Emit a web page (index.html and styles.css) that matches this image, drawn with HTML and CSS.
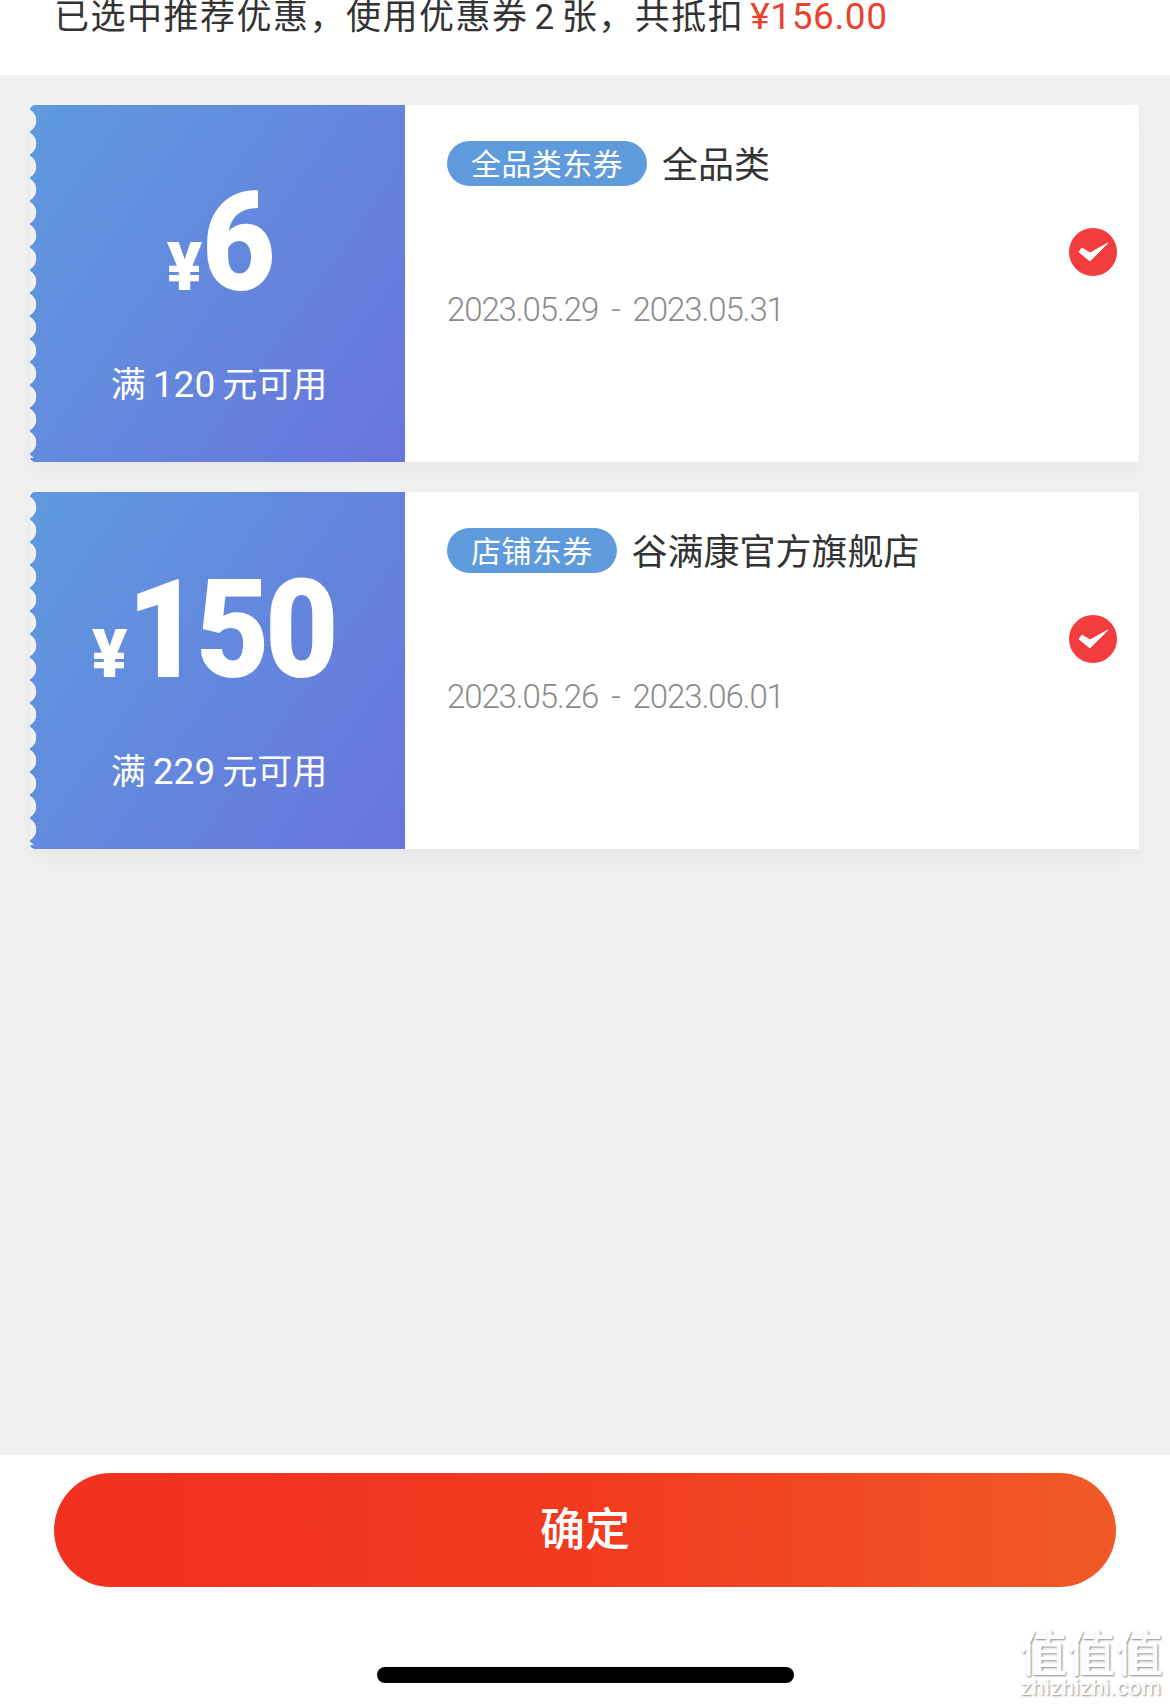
FILE: index.html
```html
<html>
    <head>
        <meta charset="utf-8">
        <link rel="stylesheet" href="styles.css">
    </head>
    <body>
        <div id="page">
            <div class="summary">已选中推荐优惠，使用优惠券<span class="num">2</span>张，共抵扣<span class="total">¥156.00</span></div>
            <div class="list">
                <div class="coupon">
                    <div class="face">
                        <div class="amount"><span class="yen">¥</span><span class="value">6</span></div>
                        <div class="limit">满<span class="num">120</span>元可用</div>
                    </div>
                    <div class="info">
                        <div class="head"><span class="pill">全品类东券</span><span class="title">全品类</span></div>
                        <div class="dates">2023.05.29<span class="sep">-</span>2023.05.31</div>
                    </div>
                    <svg class="check" viewBox="0 0 48 48">
                        <circle cx="24" cy="24" r="24" fill="#f23c3e"/>
                        <path d="M10 24 L13 20 L21 25 L39 15 L21 33 Z" fill="#fff" stroke="#fff" stroke-width="1" stroke-linejoin="round"/>
                    </svg>
                </div>
                <div class="coupon">
                    <div class="face">
                        <div class="amount"><span class="yen">¥</span><span class="value">150</span></div>
                        <div class="limit">满<span class="num">229</span>元可用</div>
                    </div>
                    <div class="info">
                        <div class="head"><span class="pill">店铺东券</span><span class="title">谷满康官方旗舰店</span></div>
                        <div class="dates">2023.05.26<span class="sep">-</span>2023.06.01</div>
                    </div>
                    <svg class="check" viewBox="0 0 48 48">
                        <circle cx="24" cy="24" r="24" fill="#f23c3e"/>
                        <path d="M10 24 L13 20 L21 25 L39 15 L21 33 Z" fill="#fff" stroke="#fff" stroke-width="1" stroke-linejoin="round"/>
                    </svg>
                </div>
            </div>
            <div class="footer">
                <div class="confirm">确定</div>
                <div class="home-bar"></div>
            </div>
            <div class="watermark">
                <div class="wm-logo">值值值</div>
                <div class="wm-site">zhizhizhi.com</div>
            </div>
        </div>
    </body>
</html>
```
FILE: styles.css
```css
body, html {
    margin: 0;
    height: 100%;
    background: #fff;
}
#page {
    position: relative;
    width: 1170px;
    height: 1707px;
    display: flex;
    flex-direction: column;
    overflow: hidden;
    font-family: "Noto Sans CJK SC", "Noto Sans", sans-serif;
}
.summary {
    height: 75px;
    padding-left: 54px;
    font-size: 35px;
    line-height: 28px;
    letter-spacing: 1.5px;
    color: #333;
    white-space: nowrap;
}
.num {
    font-family: Roboto, sans-serif;
    margin: 0 6px;
}
.total {
    font-family: Roboto, sans-serif;
    font-size: 37px;
    letter-spacing: 0.6px;
    color: #e8432e;
    margin-left: 6px;
}
.list {
    flex: 1;
    background: #f0f0f0;
    padding: 30px 31px 0 30px;
    display: flex;
    flex-direction: column;
    gap: 30px;
}
.coupon {
    height: 357px;
    display: flex;
    background: #fff;
    box-shadow: 0 12px 20px rgba(0, 0, 0, 0.035);
}
.face {
    position: relative;
    width: 375px;
    flex: none;
    border-radius: 5px 0 0 5px;
    background: linear-gradient(125deg, #5f9ade, #6875dc);
    color: #fff;
    display: flex;
    flex-direction: column;
    align-items: center;
}
.face::before {
    content: "";
    position: absolute;
    left: 0;
    top: 4px;
    bottom: 4px;
    width: 7px;
    background: radial-gradient(circle at -6px 11.5px, #f0f0f0 12px, transparent 12.6px) 0 0 / 7px 23px repeat-y;
}
.amount {
    height: 222px;
    padding: 18px 3px 0 0;
    display: flex;
    align-items: baseline;
    justify-content: center;
    line-height: 240px;
    font-family: Roboto, sans-serif;
    font-weight: 900;
}
.yen {
    font-size: 66px;
}
.value {
    font-size: 138px;
    letter-spacing: -5px;
    margin-right: -12px;
    transform: scaleX(0.92);
    transform-origin: left;
}
.limit {
    font-size: 35px;
    line-height: 48px;
    margin-top: 13px;
    padding-left: 3px;
}
.limit .num {
    font-size: 37px;
    margin: 0 7px;
}
.info {
    flex: 1;
    padding: 36px 0 0 42px;
}
.head {
    display: flex;
    align-items: center;
    gap: 15px;
}
.pill {
    height: 45px;
    line-height: 43px;
    padding: 0 24px;
    border-radius: 23px;
    background: #5f9bdc;
    color: #fff;
    font-size: 30px;
    letter-spacing: 0.4px;
}
.title {
    font-size: 36px;
    line-height: 44px;
    margin-top: -3px;
    color: #333;
}
.dates {
    margin-top: 102px;
    font-family: Roboto, sans-serif;
    font-weight: 300;
    font-size: 33px;
    line-height: 44px;
    letter-spacing: -1.1px;
    color: #8c8c8c;
}
.sep {
    margin: 0 13px;
}
.check {
    width: 48px;
    height: 48px;
    margin: 123px 22px 0 0;
    flex: none;
}
.footer {
    height: 252px;
    display: flex;
    flex-direction: column;
    align-items: center;
}
.confirm {
    width: 1062px;
    height: 114px;
    margin-top: 18px;
    border-radius: 57px;
    background: linear-gradient(90deg, #f2301f, #f23a1f 50%, #f05a27);
    color: #fff;
    font-size: 45px;
    font-weight: 500;
    line-height: 108px;
    text-align: center;
}
.home-bar {
    width: 417px;
    height: 16px;
    margin-top: 80px;
    border-radius: 8px;
    background: #000;
}
.watermark {
    position: absolute;
    right: 6px;
    bottom: 7px;
    width: 146px;
    text-align: center;
    color: #fff;
    text-shadow: 1px 1px 2px #888;
}
.wm-logo {
    font-size: 48px;
    font-weight: 500;
    line-height: 46px;
    white-space: nowrap;
}
.wm-site {
    font-family: Roboto, sans-serif;
    font-size: 22px;
    letter-spacing: 0.5px;
    line-height: 24px;
    margin-top: 3px;
}
```
